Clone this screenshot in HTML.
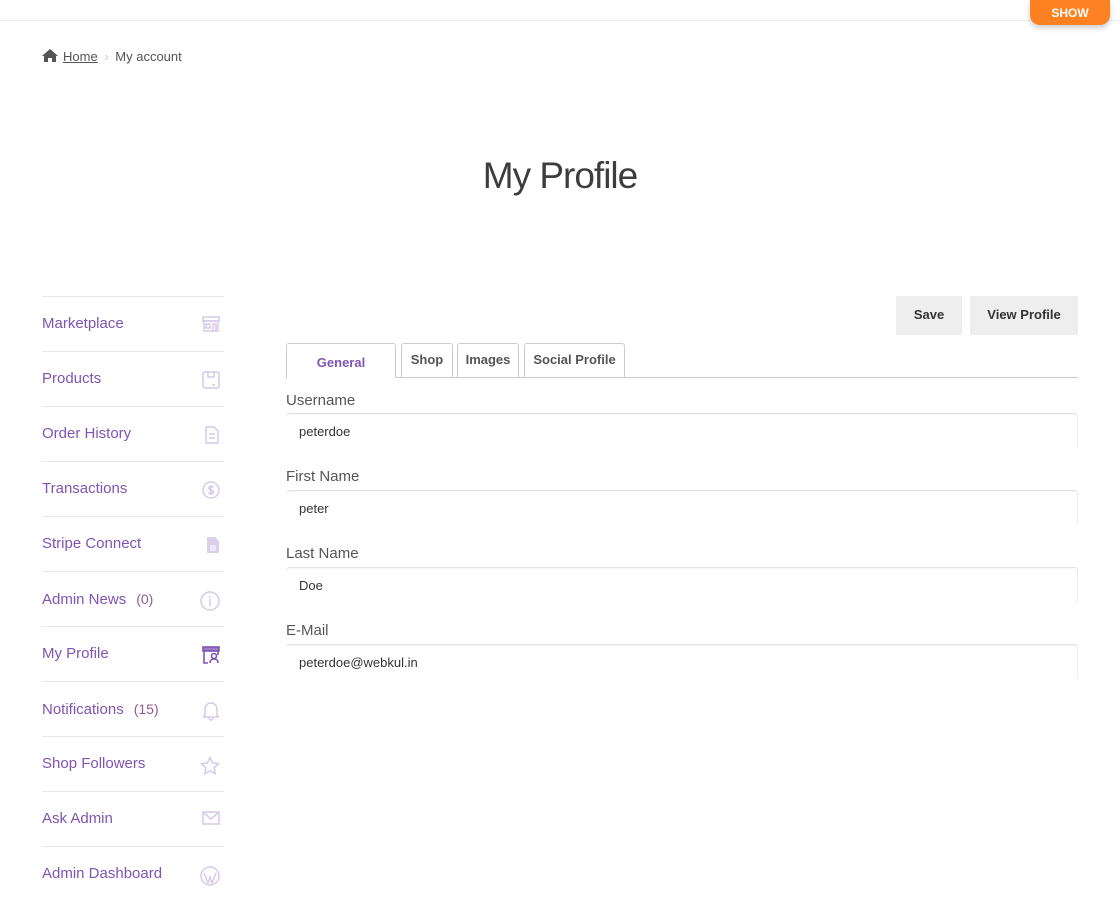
<!DOCTYPE html>
<html><head><meta charset="utf-8"><style>
*{box-sizing:border-box;margin:0;padding:0}
body{width:1120px;height:880px;overflow:hidden;background:#fff;font-family:"Liberation Sans",sans-serif;color:#43454b;position:relative}
.top{position:absolute;left:0;top:0;width:1120px;height:21px;border-bottom:1px solid #ececec}
.show{position:absolute;left:1030px;top:0;width:80px;height:25px;background:#fd8120;border-radius:0 0 10px 10px;color:#fff;font-weight:bold;font-size:12px;text-align:center;line-height:27px;box-shadow:0 3px 6px rgba(0,0,0,.2)}
.bc{position:absolute;left:42px;top:49px;font-size:13px;color:#555}
.bc a{color:#555;text-decoration:underline}
h1{position:absolute;left:0;width:1120px;top:155px;text-align:center;font-weight:300;font-size:37px;color:#3d3d3d;letter-spacing:-1px}
.side{position:absolute;left:42px;top:296px;width:182px}
.it{height:55px;border-top:1px solid #e8e8e8;position:relative;font-size:15px;color:#7f54b3;line-height:54px}
.it .c{margin-left:10px;font-size:14px;color:#96588a}
.it svg{position:absolute;right:4px;top:19px}
.btn{position:absolute;top:296px;height:39px;background:#eee;font-size:13px;font-weight:bold;color:#333;text-align:center;line-height:37px}
.tab{position:absolute;top:343px;height:34px;border:1px solid #ccc;border-bottom:none;border-radius:3px 3px 0 0;font-size:13px;font-weight:bold;color:#555;text-align:center;line-height:32px;background:#fff}
.line{position:absolute;left:286px;top:377px;width:792px;height:1px;background:#ccc}
.lab{position:absolute;left:286px;font-size:15px;color:#555}
.inp{position:absolute;left:286px;width:792px;height:36px;border-top:1px solid #e2e2e2;border-right:1px solid #eee;border-radius:3px;font-size:13px;color:#333;padding-left:13px;line-height:36px;box-shadow:inset 0 1px 1px rgba(0,0,0,.04)}
</style></head><body>
<div class="top"></div>
<div class="show">SHOW</div>
<div class="bc"><svg width="16" height="13" viewBox="0 0 16 13" style="vertical-align:-1px;margin-right:5px"><path d="M8 0L0 7h2v6h4V9h4v4h4V7h2z" fill="#555"/></svg><a>Home</a> <span style="color:#ccc;margin:0 3px">›</span> My account</div>
<h1>My Profile</h1>
<div class="side">
<div class="it">Marketplace<svg width="18" height="16" viewBox="0 0 18 16" fill="none" stroke="#d8c9ea" stroke-width="1.5"><rect x="1" y="1" width="16" height="4"/><rect x="2" y="5" width="14" height="10"/><rect x="4" y="8" width="4" height="4"/><path d="M11 15V8h3v7"/></svg></div>
<div class="it">Products<svg width="18" height="18" viewBox="0 0 18 18" fill="none" stroke="#d8c9ea" stroke-width="1.5"><rect x="1" y="1" width="16" height="16" rx="2"/><path d="M6 1v5h6V1M10 14h3"/></svg></div>
<div class="it">Order History<svg width="16" height="18" viewBox="0 0 16 18" fill="none" stroke="#d8c9ea" stroke-width="1.5"><path d="M2 1h8l4 4v12H2z M5 8h6M5 12h6"/></svg></div>
<div class="it">Transactions<svg width="18" height="18" viewBox="0 0 18 18" fill="none" stroke="#d8c9ea" stroke-width="1.5"><circle cx="9" cy="9" r="8"/><path d="M11.5 6.5C11 5.5 7 5 7 7.3S11.5 9 11.5 11.2 7.5 13 6.5 11.5M9 4v10"/></svg></div>
<div class="it">Stripe Connect<svg width="14" height="18" viewBox="0 0 14 18"><path d="M1 1h8l4 4v12H1z" fill="#ddd0ec"/><path d="M4 10h6M4 12h6M4 14h6" stroke="#fff"/></svg></div>
<div class="it">Admin News<span class="c">(0)</span><svg width="20" height="20" viewBox="0 0 20 20" fill="none" stroke="#d8c9ea" stroke-width="1.5"><circle cx="10" cy="10" r="9"/><path d="M10 8v7M10 5v1.5"/></svg></div>
<div class="it">My Profile<svg width="18" height="18" viewBox="0 0 18 18" fill="none" stroke="#7f54b3" stroke-width="1.6"><rect x="1" y="1" width="16" height="4" fill="#9d7cc4"/><path d="M2 5v12h4M16 5v4"/><circle cx="12" cy="10" r="2.5"/><path d="M8 17c0-3 2-4 4-4s4 1 4 4"/></svg></div>
<div class="it">Notifications<span class="c">(15)</span><svg width="18" height="20" viewBox="0 0 18 20" fill="none" stroke="#d8c9ea" stroke-width="1.5"><path d="M3 15V8a6 6 0 0112 0v7l2 1H1z M7 17a2 2 0 004 0"/></svg></div>
<div class="it">Shop Followers<svg width="20" height="20" viewBox="0 0 20 20" fill="none" stroke="#d8c9ea" stroke-width="1.5"><path d="M10 1.5l2.6 5.4 5.9.8-4.3 4.1 1 5.8L10 14.8l-5.2 2.8 1-5.8L1.5 7.7l5.9-.8z"/></svg></div>
<div class="it">Ask Admin<svg width="18" height="14" viewBox="0 0 18 14" fill="none" stroke="#d8c9ea" stroke-width="1.5"><rect x="1" y="1" width="16" height="12"/><path d="M1 1l8 7 8-7"/></svg></div>
<div class="it">Admin Dashboard<svg width="20" height="20" viewBox="0 0 20 20" fill="none" stroke="#d8c9ea" stroke-width="1.5"><circle cx="10" cy="10" r="9"/><path d="M4 7l4 10 2-6 2 6 4-10"/></svg></div>
</div>
<div class="btn" style="left:896px;width:66px">Save</div>
<div class="btn" style="left:970px;width:108px">View Profile</div>
<div class="line"></div>
<div class="tab" style="left:286px;width:110px;height:35px;color:#7f54b3;line-height:38px">General</div>
<div class="tab" style="left:401px;width:52px">Shop</div>
<div class="tab" style="left:457px;width:62px">Images</div>
<div class="tab" style="left:524px;width:101px">Social Profile</div>
<div class="lab" style="top:392px">Username</div>
<div class="inp" style="top:413px">peterdoe</div>
<div class="lab" style="top:468px">First Name</div>
<div class="inp" style="top:490px">peter</div>
<div class="lab" style="top:545px">Last Name</div>
<div class="inp" style="top:567px">Doe</div>
<div class="lab" style="top:622px">E-Mail</div>
<div class="inp" style="top:644px">peterdoe@webkul.in</div>
</body></html>
